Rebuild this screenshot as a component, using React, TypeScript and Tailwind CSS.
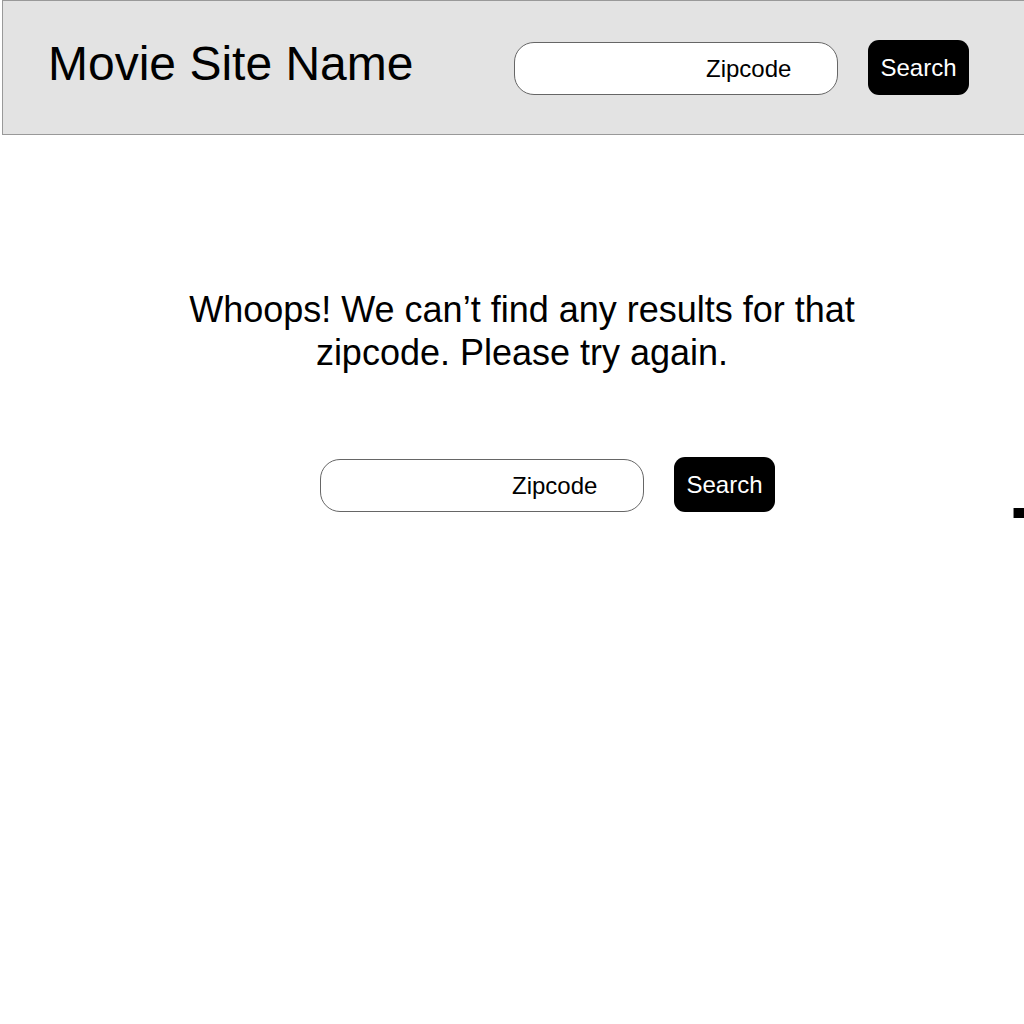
export default function App() {
  return (
    <div className="relative min-h-[1024px] w-[1024px] overflow-hidden bg-white text-black font-['Liberation_Sans',Arial,sans-serif]">
      {/* Header */}
      <header className="ml-[2px] flex h-[135px] items-start border border-r-0 border-[#999999] bg-[#e3e3e3]">
        <h1 className="ml-[45px] mt-[36px] w-[466px] text-[48px] leading-[54px] font-normal">Movie Site Name</h1>
        <SearchForm inputTop="mt-[41px]" buttonTop="mt-[39px]" />
      </header>

      {/* Empty result */}
      <main className="pl-[20px]">
        <p className="mt-[153px] text-center text-[36px] leading-[43px]">
          Whoops! We can’t find any results for that
          <br />
          zipcode. Please try again.
        </p>
        <div className="ml-[300px] mt-[83px] flex">
          <SearchForm inputTop="mt-[2px]" buttonTop="mt-0" />
        </div>
      </main>

      <div className="absolute left-[1013px] top-[508px] h-[10px] w-[11px] border-l border-[#888888] bg-black" />
    </div>
  );
}

function SearchForm({ inputTop, buttonTop }: { inputTop: string; buttonTop: string }) {
  return (
    <div className="flex items-start gap-[30px]">
      <input
        type="text"
        placeholder="Zipcode"
        className={`${inputTop} h-[53px] w-[324px] rounded-[20px] border border-[#666666] bg-white pl-[191px] text-[24px] text-black outline-none placeholder:text-black`}
      />
      <button
        className={`${buttonTop} h-[55px] w-[101px] rounded-[11px] bg-black text-[24px] text-white`}
      >
        Search
      </button>
    </div>
  );
}
